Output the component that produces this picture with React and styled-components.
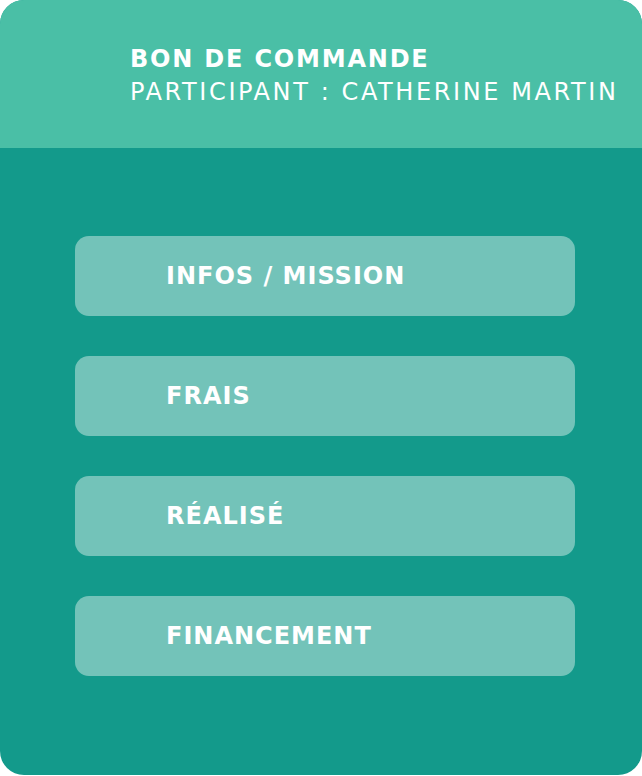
import styled, { createGlobalStyle } from "styled-components";

const headerColor = `#4ABFA6`;
const bodyColor = `#139A8B`;
const buttonColor = `#73C3B9`;

const GlobalStyle = createGlobalStyle`
  body {
    margin: 0;
    background: #ffffff;
    font-family: "DejaVu Sans", "Open Sans", sans-serif;
  }
`;

const Card = styled.div`
  width: 642px;
  height: 775px;
  border-radius: 24px;
  overflow: hidden;
  background-color: ${bodyColor};
  display: flex;
  flex-direction: column;
`;

const Header = styled.header`
  height: 148px;
  box-sizing: border-box;
  padding: 44px 0 0 130px;
  background-color: ${headerColor};
  color: white;
`;

const Title = styled.div`
  font-size: 24px;
  font-weight: 700;
  line-height: 30px;
  letter-spacing: 1.8px;
`;

const Subtitle = styled.div`
  font-size: 24px;
  font-weight: 400;
  line-height: 36px;
  letter-spacing: 2.6px;
`;

const Menu = styled.ul`
  list-style: none;
  margin: 0;
  padding: 88px 0 0 75px;
  display: flex;
  flex-direction: column;
  gap: 40px;
`;

const MenuItem = styled.li`
  width: 500px;
  height: 80px;
  box-sizing: border-box;
  padding-left: 91px;
  border-radius: 14px;
  background-color: ${buttonColor};
  color: white;
  font-size: 24px;
  font-weight: 700;
  letter-spacing: 1px;
  display: flex;
  align-items: center;
  cursor: pointer;
`;

const items = ["INFOS / MISSION", "FRAIS", "RÉALISÉ", "FINANCEMENT"];

export default function App() {
  return (
    <>
      <GlobalStyle />
      <Card>
        <Header>
          <Title>BON DE COMMANDE</Title>
          <Subtitle>PARTICIPANT : CATHERINE MARTIN</Subtitle>
        </Header>
        <Menu>
          {items.map((label) => (
            <MenuItem key={label}>{label}</MenuItem>
          ))}
        </Menu>
      </Card>
    </>
  );
}
